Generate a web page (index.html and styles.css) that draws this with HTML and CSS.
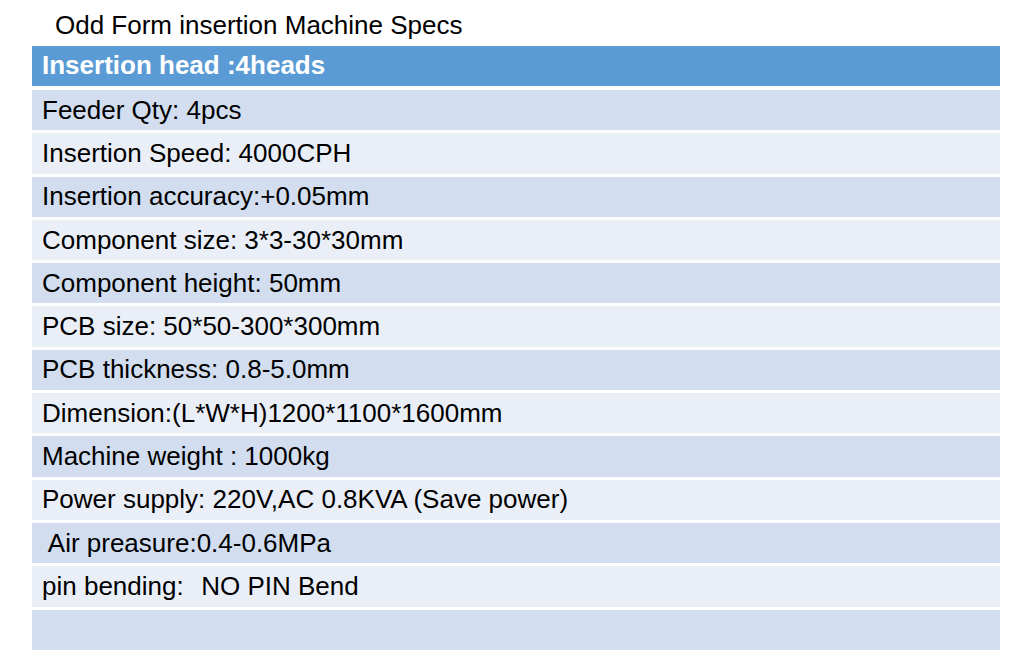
FILE: index.html
```html
<!DOCTYPE html>
<html lang="en">
<head>
<meta charset="utf-8">
<title>Odd Form insertion Machine Specs</title>
<link rel="stylesheet" href="styles.css">
</head>
<body>
<div class="page">
  <h1 class="title">Odd Form insertion Machine Specs</h1>
  <div class="specs">
    <div class="row head">Insertion head :4heads</div>
    <div class="rows">
      <div class="row odd">Feeder Qty: 4pcs</div>
      <div class="row even">Insertion Speed: 4000CPH</div>
      <div class="row odd">Insertion accuracy:+0.05mm</div>
      <div class="row even">Component size: 3*3-30*30mm</div>
      <div class="row odd">Component height: 50mm</div>
      <div class="row even">PCB size: 50*50-300*300mm</div>
      <div class="row odd">PCB thickness: 0.8-5.0mm</div>
      <div class="row even">Dimension:(L*W*H)1200*1100*1600mm</div>
      <div class="row odd">Machine weight : 1000kg</div>
      <div class="row even">Power supply: 220V,AC 0.8KVA (Save power)</div>
      <div class="row odd"> Air preasure:0.4-0.6MPa</div>
      <div class="row even">pin bending:<span class="gap"></span>NO PIN Bend</div>
      <div class="row odd"></div>
    </div>
  </div>
</div>
</body>
</html>
```
FILE: styles.css
```css
* { box-sizing: border-box; }
html, body { margin: 0; padding: 0; background: #ffffff; }
body {
  font-family: "Liberation Sans", Arial, sans-serif;
  color: #000000;
}
.page {
  width: 1024px;
  height: 665px;
  padding: 8px 24px 0 32px;
}
.title {
  margin: 0 0 0 23px;
  height: 38px;
  font-size: 26px;
  font-weight: normal;
  line-height: 34px;
}
.specs {
  width: 968px;
  display: flex;
  flex-direction: column;
}
.row {
  height: 40.3px;
  display: flex;
  align-items: center;
  padding-left: 10px;
  font-size: 26px;
  white-space: pre;
}
.head {
  height: 39.5px;
  margin-bottom: 4.5px;
  background: #5b9bd5;
  color: #ffffff;
  font-weight: bold;
}
.rows {
  display: flex;
  flex-direction: column;
  gap: 3px;
}
.odd { background: #d2deef; }
.even { background: #eaeff7; }
.gap {
  display: inline-block;
  width: 17.5px;
}
```
